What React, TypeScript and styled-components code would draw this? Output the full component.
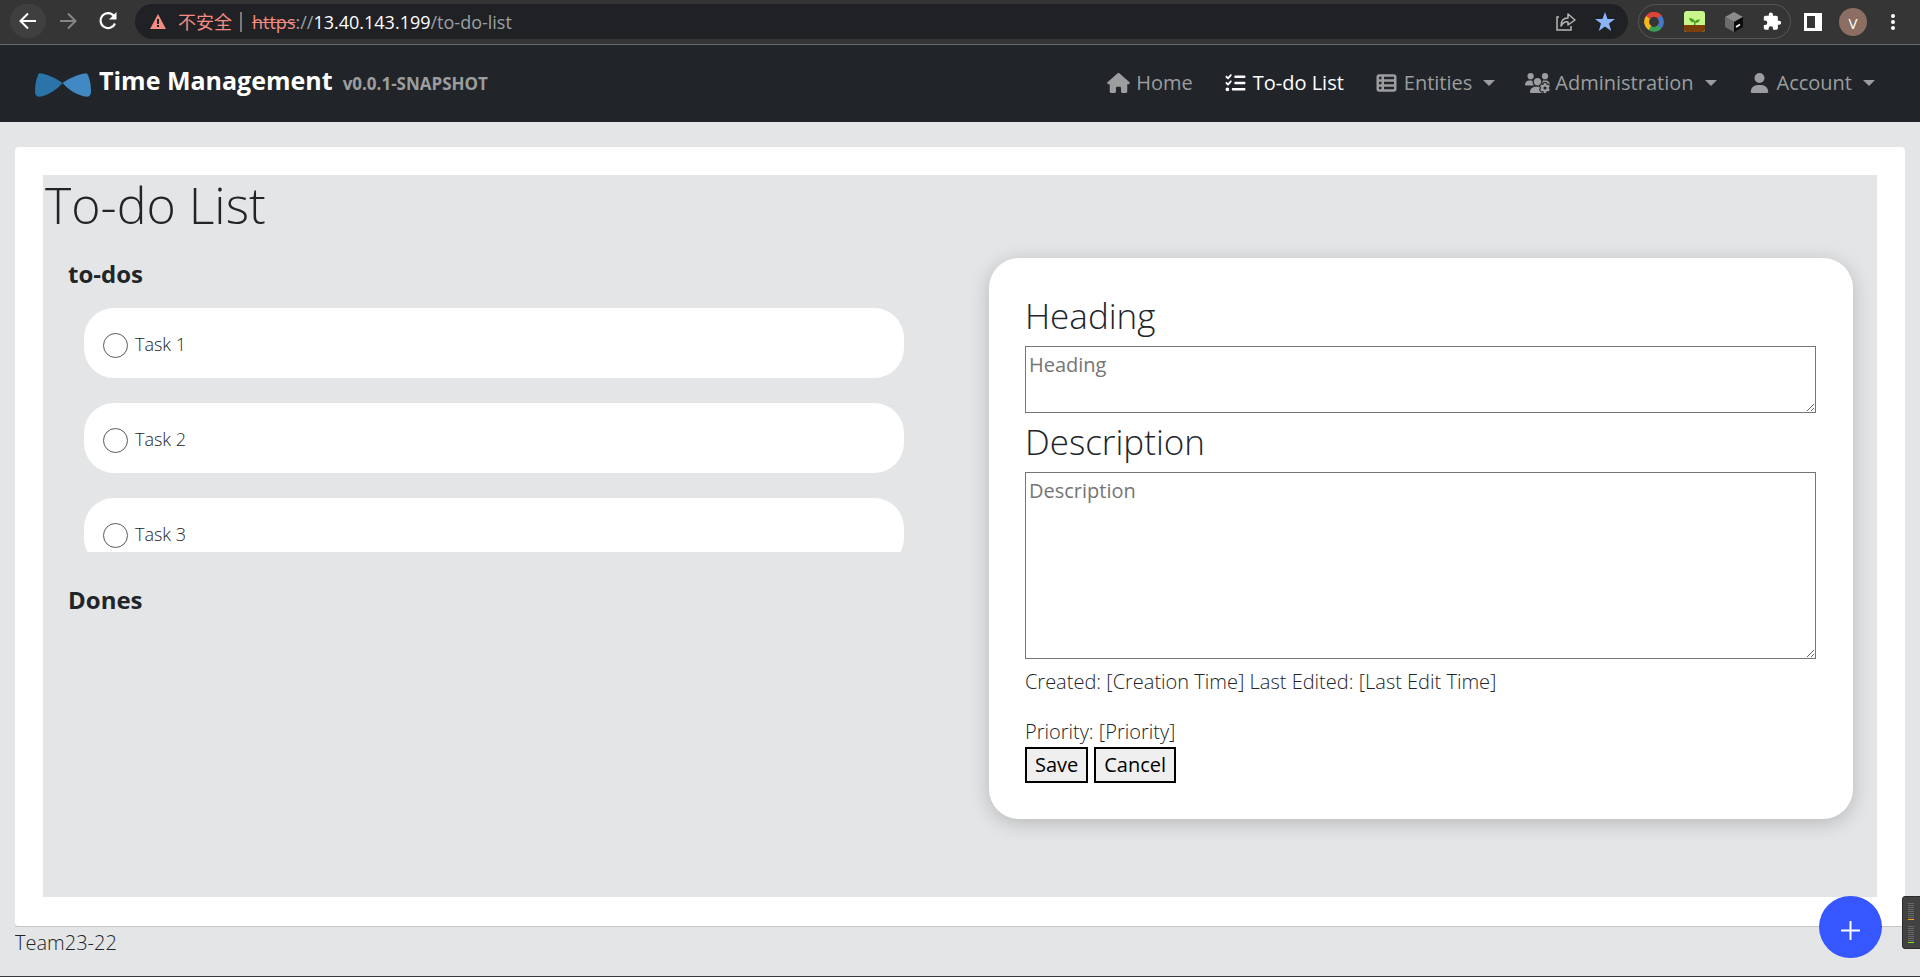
import React, { useState } from "react";
import styled, { createGlobalStyle } from "styled-components";
import { FaHouse, FaListCheck, FaTableList, FaUsersGear, FaUser } from "react-icons/fa6";

const Global = createGlobalStyle`
  *, *::before, *::after { box-sizing: border-box; }
  body {
    margin: 0;
    background: #e4e5e6;
    color: #212529;
    font: 300 20px/30px "Open Sans", "Noto Sans CJK SC", sans-serif;
  }
  #root { min-height: 100vh; display: flex; }
`;

const Page = styled.div`
  flex: 1;
  min-width: 0;
  min-height: 100vh;
  display: flex;
  flex-direction: column;
  border-bottom: 1px solid #343a40;
`;

const BrowserBar = styled.header`
  display: flex;
  align-items: center;
  height: 45px;
  padding: 0 22px 5px 10px;
  background: #353535;
  border-bottom: 1px solid #6a6a6a;
`;
const RoundButton = styled.button<{ $lit?: boolean }>`
  display: grid;
  place-items: center;
  width: 36px;
  height: 34px;
  margin: 2px 4px 0 0;
  padding: 0;
  border: 0;
  border-radius: 17px;
  background: ${(p) => (p.$lit ? "#3f3f3f" : "transparent")};
`;
const AddressBar = styled.div`
  flex: 1;
  display: flex;
  align-items: center;
  height: 35px;
  margin: 4px 10px 0 5px;
  padding: 0 13px 0 15px;
  border-radius: 18px;
  background: #202124;
  font-size: 18px;
  font-weight: 400;
  line-height: 24px;
  color: #9aa0a6;
`;
const Unsafe = styled.span`
  margin: 0 10px 0 12px;
  padding-right: 8px;
  border-right: 2px solid #77797c;
  color: #f28b82;
  line-height: 20px;
`;
const Url = styled.span`
  flex: 1;
  s { color: #f28b82; }
  b { color: #ffffff; font-weight: 400; }
`;
const BarIcons = styled.div`
  display: flex;
  align-items: center;
  gap: 19px;
`;
const Extensions = styled.div`
  display: flex;
  align-items: center;
  gap: 20px;
  height: 35px;
  margin-top: 4px;
  padding: 0 8px 0 5px;
  border: 1px solid #555657;
  border-radius: 18px;
`;
const Tools = styled.div`
  display: flex;
  align-items: center;
  gap: 17px;
  margin: 4px 0 0 13px;
`;
const Avatar = styled.span`
  display: grid;
  place-items: center;
  width: 28px;
  height: 28px;
  border-radius: 50%;
  background: #8d6e63;
  color: #ffffff;
  font-size: 15px;
  font-weight: 400;
`;

const Navbar = styled.nav`
  display: flex;
  align-items: center;
  justify-content: space-between;
  height: 77px;
  padding: 0 45px 2px 35px;
  background: #212529;
`;
const Brand = styled.a`
  display: flex;
  align-items: baseline;
  padding-bottom: 2px;
  color: #ffffff;
  text-decoration: none;
  font-size: 25px;
  font-weight: 700;
  svg { align-self: center; margin: 6px 8px 0 0; }
  small { margin-left: 10px; color: #9b9d9f; font-size: 17px; }
`;
const NavList = styled.ul`
  display: flex;
  gap: 30px;
  margin: 0;
  padding: 0;
  list-style: none;
`;
const NavLink = styled.a<{ $active?: boolean }>`
  display: flex;
  align-items: center;
  color: ${(p) => (p.$active ? "#ffffff" : "#9b9d9f")};
  text-decoration: none;
  font-weight: 400;
  svg { width: 25px; height: 20px; margin-right: 5px; }
`;
const Caret = styled.i`
  margin-left: 11px;
  border: 6px solid transparent;
  border-top-color: currentColor;
  border-bottom: 0;
`;

const Main = styled.main`
  flex: 1;
  margin: 25px 15px 0;
  padding: 28px 28px 29px;
  border-radius: 4px;
  background: #ffffff;
`;
const Board = styled.section`
  height: 100%;
  background: #e4e5e6;
`;
const Title = styled.h1`
  margin: 0;
  padding: 0 2px;
  font-size: 50px;
  font-weight: 300;
  line-height: 60px;
`;
const Columns = styled.div`
  display: grid;
  grid-template-columns: calc(47% - 3px) 1fr;
  align-items: start;
  padding: 0 24px 77px 25px;
`;
const SectionTitle = styled.h2`
  margin: 0;
  font-size: 24px;
  font-weight: 700;
  line-height: 30px;
`;
const Left = styled.div`
  padding-top: 24px;
`;
const TaskList = styled.ul`
  height: 244px;
  margin: 19px 0 33px;
  padding: 0 0 0 16px;
  overflow: hidden;
  list-style: none;
`;
const Task = styled.li`
  height: 70px;
  margin-bottom: 25px;
  border-radius: 30px;
  background: #ffffff;
  font-size: 18px;
  label {
    display: flex;
    align-items: flex-start;
    gap: 7px;
    padding: 21px 19px 0;
  }
`;
const Tick = styled.input`
  appearance: none;
  width: 25px;
  height: 25px;
  margin: 4px 0 0;
  border: 1px solid #5a5a5a;
  border-radius: 50%;
  &:checked { background: #3656ff; }
`;
const Form = styled.form`
  margin: 23px 0 0 85px;
  padding: 37px 37px 36px 36px;
  border-radius: 30px;
  background: #ffffff;
  box-shadow: 0 4px 20px rgba(0, 0, 0, 0.2);
`;
const FieldLabel = styled.label`
  display: block;
  margin-bottom: 9px;
  font-size: 35px;
  line-height: 42px;
`;
const Area = styled.textarea<{ $tall?: boolean }>`
  display: block;
  width: 100%;
  height: ${(p) => (p.$tall ? 187 : 67)}px;
  margin-bottom: 8px;
  padding: 3px;
  border: 1px solid #767676;
  background: #ffffff;
  font: inherit;
  font-weight: 400;
  &::placeholder { color: #757575; }
`;
const Meta = styled.p`
  margin: 0 0 20px;
`;
const Buttons = styled.div`
  display: flex;
  gap: 6px;
`;
const Button = styled.button`
  height: 36px;
  padding: 0 8px;
  border: 2px solid #000000;
  background: #efefef;
  color: #000000;
  font: inherit;
  font-weight: 400;
  line-height: 30px;
`;
const Footer = styled.footer`
  height: 50px;
  margin: 0 15px;
  padding-top: 1px;
  border-top: 1px solid #c2c6ca;
`;
const AddButton = styled.button`
  position: fixed;
  right: 38px;
  bottom: 19px;
  display: grid;
  place-items: center;
  width: 63px;
  height: 62px;
  padding: 6px 0 0;
  border: 0;
  border-radius: 50%;
  background: #3656ff;
`;
const Meter = styled.aside`
  position: fixed;
  right: 0;
  bottom: 28px;
  width: 18px;
  height: 53px;
  svg { display: block; }
`;

const BowTie = () => (
  <svg width="56" height="24" viewBox="0 0 57 24" aria-hidden="true">
    <path fill="#2b74a9" d="M5 0C13 1 21 5 28 10C22 17 13 23 4 24Q0 23 0 19Q0 9 3 2Q3 0 5 0Z" />
    <path fill="#4189c4" d="M52 0C44 1 35 5 28 10C35 18 44 23 53 24Q57 23 57 19Q57 9 54 2Q53 0 52 0Z" />
  </svg>
);

const bars = Array.from({ length: 8 }, (_, i) => i * 2);

const tasks = ["Task 1", "Task 2", "Task 3"];

const links = [
  { text: "Home", Icon: FaHouse },
  { text: "To-do List", Icon: FaListCheck, active: true },
  { text: "Entities", Icon: FaTableList, menu: true },
  { text: "Administration", Icon: FaUsersGear, menu: true },
  { text: "Account", Icon: FaUser, menu: true },
];

function Browser() {
  return (
    <BrowserBar>
      <RoundButton $lit aria-label="Back">
        <svg width="20" height="20" viewBox="0 0 20 20" fill="none" stroke="#fff" strokeWidth="2"><path d="M18 10H3M10 2.500L2.500 10L10 17.500" /></svg>
      </RoundButton>
      <RoundButton aria-label="Forward">
        <svg width="20" height="20" viewBox="0 0 20 20" fill="none" stroke="#868686" strokeWidth="2"><path d="M2 10H17M10 2.500L17.500 10L10 17.500" /></svg>
      </RoundButton>
      <RoundButton aria-label="Reload">
        <svg width="20" height="20" viewBox="0 0 20 20" fill="none" stroke="#fff" strokeWidth="2.200"><path d="M16 5A7.500 7.500 0 1 0 17 12.500" /><path d="M18.500 1V8.500H11Z" fill="#fff" stroke="none" /></svg>
      </RoundButton>
      <AddressBar>
        <svg width="16" height="15" viewBox="0 0 16 15"><path d="M8 0L16 15H0Z" fill="#f28b82" /><path d="M7 5h2v5H7zM7 11h2v2H7z" fill="#202124" /></svg>
        <Unsafe>不安全</Unsafe>
        <Url><s>https</s>://<b>13.40.143.199</b>/to-do-list</Url>
        <BarIcons>
          <svg width="20" height="20" viewBox="0 0 20 20" fill="none" stroke="#b5b6b8" strokeWidth="1.500"><path d="M3 5H1V18H15V14" /><path d="M5 14Q5 6 12 6V2L19 8L12 13V10Q8 9 5 14Z" strokeLinejoin="round" /></svg>
          <svg width="20" height="20" viewBox="0 0 20 20"><path fill="#8ab4f8" d="M10 0L12.500 7H20L14 11.500L16.200 19L10 14.500L3.800 19L6 11.500L0 7H7.500Z" /></svg>
        </BarIcons>
      </AddressBar>
      <Extensions>
        <svg width="20" height="20" viewBox="0 0 22 22" fill="none" strokeWidth="5.500">
          <path stroke="#db4437" d="M4 6.500A8 8 0 0 1 17.500 6" />
          <path stroke="#4779c8" d="M17 5.500A8 8 0 0 1 16.500 17" />
          <path stroke="#3b9e57" d="M17 16.500A8 8 0 0 1 6 17.200" />
          <path stroke="#f4b71e" d="M6.500 17.500A8 8 0 0 1 4.500 6" />
        </svg>
        <svg width="21" height="21" viewBox="0 0 21 21">
          <rect width="21" height="21" rx="3" fill="#c8f58c" />
          <path d="M0 14H21V18Q21 21 18 21H3Q0 21 0 18Z" fill="#7b3f0c" />
          <path d="M10 14V11Q6 12 5 7Q10 7 11 10.500Q12 8 16 8.500Q15 12 11.500 12V14Z" fill="#4d9f20" />
        </svg>
        <svg width="18" height="20" viewBox="0 0 18 20">
          <path d="M9 0L18 5L9 10L0 5Z" fill="#8b8b8b" />
          <path d="M0 5L9 10V20L0 15Z" fill="#6c6c6c" />
          <path d="M18 5L9 10V20L18 15Z" fill="#0b0b0b" />
          <path d="M11 15L15 12.500" stroke="#fff" strokeWidth="1.500" />
        </svg>
        <svg width="19" height="19" viewBox="1 1 23 22"><path fill="#fff" d="M20.500 11H19V7c0-1.100-.9-2-2-2h-4V3.500a2.500 2.500 0 0 0-5 0V5H4c-1.100 0-2 .9-2 2v3.800h1.500a2.700 2.700 0 0 1 0 5.400H2V20c0 1.100.9 2 2 2h3.800v-1.500a2.700 2.700 0 0 1 5.400 0V22H17c1.100 0 2-.9 2-2v-4h1.500a2.500 2.500 0 0 0 0-5Z" /></svg>
      </Extensions>
      <Tools>
        <svg width="18" height="18" viewBox="0 0 18 18"><path fill="#fff" fillRule="evenodd" d="M0 0H18V18H0ZM3 3V15H11V3Z" /></svg>
        <Avatar>V</Avatar>
        <svg width="14" height="18" viewBox="0 0 14 18" fill="#fff"><circle cx="9" cy="3" r="2" /><circle cx="9" cy="9" r="2" /><circle cx="9" cy="15" r="2" /></svg>
      </Tools>
    </BrowserBar>
  );
}

export default function App() {
  const [chosen, setChosen] = useState("");
  return (
    <Page>
      <Global />
      <Browser />
      <Navbar>
        <Brand href="#"><BowTie />Time Management<small>v0.0.1-SNAPSHOT</small></Brand>
        <NavList>
          {links.map(({ text, Icon, active, menu }) => (
            <li key={text}>
              <NavLink href="#" $active={active}><Icon />{text}{menu && <Caret />}</NavLink>
            </li>
          ))}
        </NavList>
      </Navbar>
      <Main>
        <Board>
          <Title>To-do List</Title>
          <Columns>
            <Left>
              <SectionTitle>to-dos</SectionTitle>
              <TaskList>
                {tasks.map((task) => (
                  <Task key={task}>
                    <label>
                      <Tick type="radio" name="task" checked={chosen === task} onChange={() => setChosen(task)} />
                      {task}
                    </label>
                  </Task>
                ))}
              </TaskList>
              <SectionTitle>Dones</SectionTitle>
            </Left>
            <Form onSubmit={(e) => e.preventDefault()}>
              <FieldLabel htmlFor="heading">Heading</FieldLabel>
              <Area id="heading" placeholder="Heading" />
              <FieldLabel htmlFor="description">Description</FieldLabel>
              <Area id="description" placeholder="Description" $tall />
              <Meta>Created: [Creation Time] Last Edited: [Last Edit Time]</Meta>
              <div>Priority: [Priority]</div>
              <Buttons>
                <Button type="submit">Save</Button>
                <Button type="button">Cancel</Button>
              </Buttons>
            </Form>
          </Columns>
        </Board>
      </Main>
      <Footer>Team23-22</Footer>
      <AddButton aria-label="Add">
        <svg width="19" height="19" viewBox="0 0 19 19" stroke="#fff" strokeWidth="2"><path d="M9.500 0V19M0 9.500H19" /></svg>
      </AddButton>
      <Meter aria-hidden="true">
        <svg width="18" height="53" viewBox="0 0 18 53">
          <path d="M18 0.500H3Q0.500 0.500 0.500 3V50Q0.500 52.500 3 52.500H18" fill="#424242" stroke="#2c2c2c" />
          {bars.map((y) => (
            <g key={y} fill="#686868">
              <rect x="6" y={7 + y} width="6" height="1" />
              <rect x="6" y={30 + y} width="6" height="1" />
            </g>
          ))}
          <rect x="6" y="23" width="6" height="1" fill="#f5a623" />
          <rect x="6" y="46" width="6" height="1" fill="#7fe61e" />
        </svg>
      </Meter>
    </Page>
  );
}
